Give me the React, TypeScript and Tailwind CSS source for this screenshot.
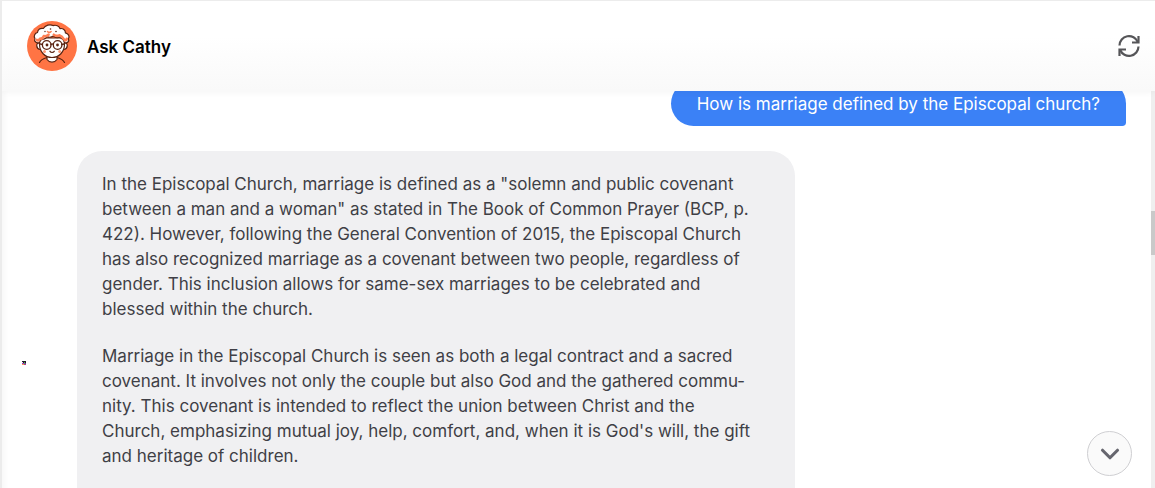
import { ChevronDown } from 'lucide-react';

const question = 'How is marriage defined by the Episcopal church?';

const answer = [
  'In the Episcopal Church, marriage is defined as a "solemn and public covenant between a man and a woman" as stated in The Book of Common Prayer (BCP, p. 422). However, following the General Convention of 2015, the Episcopal Church has also recognized marriage as a covenant between two people, regardless of gender. This inclusion allows for same-sex marriages to be celebrated and blessed within the church.',
  "Marriage in the Episcopal Church is seen as both a legal contract and a sacred covenant. It involves not only the couple but also God and the gathered commu\u00adnity. This covenant is intended to reflect the union between Christ and the Church, emphasizing mutual joy, help, comfort, and, when it is God's will, the gift and heritage of children.",
];

const CathyAvatar = () => (
  <svg className="size-[50px] shrink-0" viewBox="0 0 50 50" fill="none" aria-hidden="true">
    <circle cx="25" cy="25" r="25" fill="#ff7444" />
    <g stroke="#5a2412" strokeWidth="1.2" strokeLinecap="round" strokeLinejoin="round">
      {/* Shoulders and collar */}
      <path d="M12.500 41.500c1.200-2.700 3.500-3.900 7.500-5M37.500 41.500c-1.200-2.700-3.500-3.900-7.500-5" />
      <path d="M20 35.500v3c2.500 3.600 7.500 3.600 10 0v-3" fill="#fff" />
      {/* Ears and face */}
      <path d="M12.500 22c-4-.5-3.600 6 .8 6.500M37.500 22c4-.5 3.600 6-.8 6.500" fill="#fff" />
      <path d="M12.500 17v6c0 8 5.500 13.500 12.500 13.500S37.500 31 37.500 23v-6z" fill="#fff" />
      {/* Curls */}
      <path
        d="M12.500 21.500c-3 1.200-5.800-1-4.600-4-1.500-2.500 0-5.500 2.600-6 .2-3 3-4.800 5.800-4C18.300 4.200 23 2.800 26 4.600c3-1 6.200.4 7 3 3-.6 5.600 1.400 5.400 4.200 3 .6 4.600 3.600 3 5.900 1.200 2.800-1 4.800-3.900 3.800-1-3-3-4.500-5-5.500-2 1-4.500.5-6-1-2.500 1.500-5 1.500-6.500.2-1 2.300-3 3.300-5 2.800-1.300 1-2 2-2.500 3.500z"
        fill="#fff"
      />
    </g>
    <g stroke="#ff8055" strokeWidth="2.6" strokeLinecap="round" strokeLinejoin="round">
      <path d="M9.800 18.800c1 1.300 2.200.6 3-1 2 0 3.500-1 4-2.700 2 .4 3.600 0 4.800-1.400M26.800 13.700c1.800 1.400 3.500 1.600 5.500.6 2 .6 3.500 2 4.500 3.900M39.800 17.800c-.4 1.500-1.200 2-2 1.200" />
      <path d="M20.500 10.500c1 1 2.600 1 3.600 0" strokeWidth="1.600" />
    </g>
    <g fill="#5a2412">
      <circle cx="23.500" cy="8" r=".8" />
      <circle cx="29" cy="10.500" r=".8" />
      <circle cx="18" cy="10.500" r=".7" />
      <circle cx="20" cy="24" r="1.400" />
      <circle cx="30.500" cy="24" r="1.400" />
    </g>
    <g stroke="#5a2412" strokeWidth="1.300" strokeLinecap="round">
      <circle cx="19.700" cy="24" r="4.300" />
      <circle cx="30.600" cy="24" r="4.300" />
      <path d="M24 23.500c.7-.7 1.600-.7 2.300 0M15.400 23.500l-2-.5M34.900 23.500l2-.5M23 30.300c1 1.500 3.200 1.500 4.200 0" />
    </g>
    <g fill="#ff9c78">
      <circle cx="17.500" cy="30.500" r="1.500" />
      <circle cx="32.700" cy="30.500" r="1.500" />
    </g>
  </svg>
);

const RefreshIcon = () => (
  <svg className="size-6" viewBox="0 0 24 24" fill="none" stroke="#555558" strokeWidth="2.2" aria-hidden="true">
    <path d="M2.500 11.500a9.500 9.500 0 0 1 18.300-3.500M21.500 12.500a9.500 9.500 0 0 1-18.300 3.500" />
    <path d="M21.500 2v6.500H15M2.500 22v-6.500H9" />
  </svg>
);

// Tiny sender marker beside each reply
const SenderMark = () => (
  <svg className="size-1" viewBox="0 0 4 4" shapeRendering="crispEdges" aria-hidden="true">
    <path d="M0 0h4v2H0z" fill="#1b1b2b" />
    <path d="M0 1h1v1H0z" fill="#e8d8f0" />
    <path d="M2 1h1v1H2z" fill="#6a9a30" />
    <path d="M0 2h2v1H0z" fill="#a040c0" />
    <path d="M2 2h1v1H2z" fill="#30b080" />
    <path d="M3 2h1v1H3z" fill="#7a3090" />
    <path d="M0 3h2v1H0z" fill="#ff9850" />
    <path d="M2 3h2v1H2z" fill="#b04090" />
  </svg>
);

const Header = () => (
  <header className="relative z-10 flex h-[90px] shrink-0 items-center justify-between bg-linear-to-b from-white from-40% to-[#f9f9f9] pr-3 pl-[25px] shadow-[0_0_8px_rgba(0,0,0,0.06)]">
    <div className="flex items-center gap-[10px]">
      <CathyAvatar />
      <h1 className="pt-[2px] text-[17px] leading-[25px] font-semibold text-black">Ask Cathy</h1>
    </div>
    <button type="button" aria-label="Restart conversation" className="flex size-7 items-center justify-center">
      <RefreshIcon />
    </button>
  </header>
);

export default function App() {
  return (
    <div className="flex h-screen flex-col overflow-hidden border-t border-l-2 border-t-[#ececec] border-l-[#ececec] bg-white font-['Inter',sans-serif]">
      <Header />
      <div className="flex min-h-0 flex-1">
        <main className="relative flex min-w-0 flex-1 flex-col gap-[25px] overflow-hidden pr-[25px] pl-5 shadow-[inset_8px_0_6px_-6px_rgba(0,0,0,0.04)]">
          <p className="-mt-[10px] shrink-0 self-end rounded-[24px] rounded-br-[4px] bg-[#3b81f6] px-[26px] pt-[11px] pb-[9px] text-[17px] leading-[25px] text-white">
            {question}
          </p>
          <div className="flex min-h-0 flex-1 items-start gap-[51px]">
            <div className="flex h-full shrink-0 flex-col justify-center pt-[86px]">
              <SenderMark />
            </div>
            <article className="h-[480px] max-w-[718px] min-w-0 space-y-[22px] rounded-[25px] bg-[#f0f0f2] pt-[21px] pr-11 pb-5 pl-[25px] text-[17px] leading-[25px] text-[#3f3f46]">
              {answer.map((paragraph) => (
                <p key={paragraph}>{paragraph}</p>
              ))}
            </article>
          </div>
          <button
            type="button"
            aria-label="Scroll to latest"
            className="absolute right-[19px] bottom-3 flex size-[45px] items-center justify-center rounded-full border border-[#cfcfd2] bg-[#fafafa] text-[#66666e]"
          >
            <ChevronDown className="size-[30px]" strokeWidth={2.5} />
          </button>
        </main>
        <div className="w-1 shrink-0 bg-[#efefef] pt-[120px]">
          <div className="h-11 bg-[#c9c9c9]" />
        </div>
      </div>
    </div>
  );
}
